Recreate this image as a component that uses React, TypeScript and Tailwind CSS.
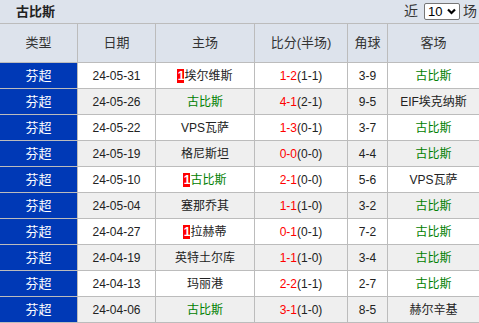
import React from 'react';

type Row = {
    date: string;
    home: string;
    homeGreen?: boolean;
    homeBadge?: boolean;
    score: string;
    half: string;
    corner: string;
    away: string;
    awayGreen?: boolean;
};

const rows: Row[] = [
    { date: '24-05-31', home: '埃尔维斯', homeBadge: true, score: '1-2', half: '(1-1)', corner: '3-9', away: '古比斯', awayGreen: true },
    { date: '24-05-26', home: '古比斯', homeGreen: true, score: '4-1', half: '(2-1)', corner: '9-5', away: 'EIF埃克纳斯' },
    { date: '24-05-22', home: 'VPS瓦萨', score: '1-3', half: '(0-1)', corner: '3-7', away: '古比斯', awayGreen: true },
    { date: '24-05-19', home: '格尼斯坦', score: '0-0', half: '(0-0)', corner: '4-4', away: '古比斯', awayGreen: true },
    { date: '24-05-10', home: '古比斯', homeGreen: true, homeBadge: true, score: '2-1', half: '(0-0)', corner: '5-6', away: 'VPS瓦萨' },
    { date: '24-05-04', home: '塞那乔其', score: '1-1', half: '(1-0)', corner: '3-2', away: '古比斯', awayGreen: true },
    { date: '24-04-27', home: '拉赫蒂', homeBadge: true, score: '0-1', half: '(0-1)', corner: '7-2', away: '古比斯', awayGreen: true },
    { date: '24-04-19', home: '英特土尔库', score: '1-1', half: '(1-0)', corner: '3-4', away: '古比斯', awayGreen: true },
    { date: '24-04-13', home: '玛丽港', score: '2-2', half: '(1-1)', corner: '2-7', away: '古比斯', awayGreen: true },
    { date: '24-04-06', home: '古比斯', homeGreen: true, score: '3-1', half: '(1-0)', corner: '8-5', away: '赫尔辛基' },
];

const font = { fontFamily: '"Liberation Sans", "Noto Sans CJK SC", sans-serif' };

export default function App() {
    return (
        <div className="w-[479px] h-[323px] overflow-hidden bg-white text-[12px] text-[#222]" style={font}>
            {/* Title bar */}
            <div className="h-[24px] flex items-center justify-between bg-[#dde3ec] border-b border-[#bcbcbc]">
                <span className="pl-4 font-bold text-[13px] text-[#222]">古比斯</span>
                <div className="flex items-center pr-[2px] text-[14px] text-[#333]">
                    <span>近</span>
                    <div className="ml-[6px] mr-[3px] w-[36px] h-[17px] flex items-center justify-between px-[3px] bg-white border border-[#767676] rounded-[2px] text-[13px] text-black">
                        <span>10</span>
                        <svg width="9" height="7" viewBox="0 0 9 7">
                            <path d="M1 1.5 L4.5 5 L8 1.5" fill="none" stroke="#000" strokeWidth="2.2" />
                        </svg>
                    </div>
                    <span>场</span>
                </div>
            </div>

            {/* Header */}
            <div className="flex h-[39px] bg-[#dde3ec] border-b border-[#bcbcbc] text-[13px] text-[#333]">
                <div className="w-[78px] flex items-center justify-center border-r border-[#bcbcbc]">类型</div>
                <div className="w-[78px] flex items-center justify-center border-r border-[#bcbcbc]">日期</div>
                <div className="w-[99px] flex items-center justify-center border-r border-[#bcbcbc]">主场</div>
                <div className="w-[93px] flex items-center justify-center border-r border-[#bcbcbc]">比分(半场)</div>
                <div className="w-[40px] flex items-center justify-center border-r border-[#bcbcbc]">角球</div>
                <div className="flex-1 flex items-center justify-center">客场</div>
            </div>

            {/* Rows */}
            {rows.map((r, i) => (
                <div key={i} className={`flex h-[26px] border-b border-[#bcbcbc] text-[12px] ${i % 2 === 0 ? 'bg-white' : 'bg-[#efefef]'}`}>
                    <div className="w-[78px] flex items-center justify-center bg-[#0039b6] text-white text-[13px] border-r border-[#bcbcbc]">芬超</div>
                    <div className="w-[78px] flex items-center justify-center border-r border-[#bcbcbc]">{r.date}</div>
                    <div className="w-[99px] flex items-center justify-center border-r border-[#bcbcbc]">
                        {r.homeBadge && (
                            <span className="inline-flex items-center justify-center w-[7px] h-[14px] bg-[#ff0000] text-white font-bold text-[12px] leading-none">1</span>
                        )}
                        <span className={r.homeGreen ? 'text-[#008000]' : ''}>{r.home}</span>
                    </div>
                    <div className="w-[93px] flex items-center justify-center border-r border-[#bcbcbc]">
                        <span className="text-[#ff0000]">{r.score}</span>
                        <span>{r.half}</span>
                    </div>
                    <div className="w-[40px] flex items-center justify-center border-r border-[#bcbcbc]">{r.corner}</div>
                    <div className={`flex-1 flex items-center justify-center ${r.awayGreen ? 'text-[#008000]' : ''}`}>{r.away}</div>
                </div>
            ))}
        </div>
    );
}
